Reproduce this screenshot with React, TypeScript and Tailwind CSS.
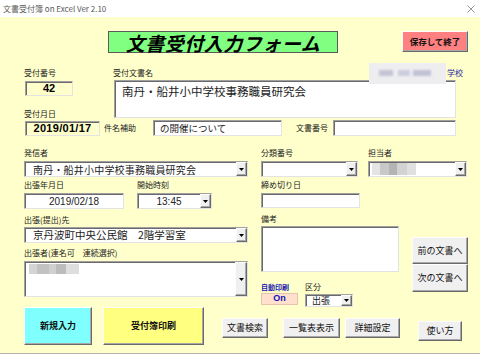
import React from "react";

const LBL = "block h-[12px] leading-[12px] text-[8px] text-[#1a1a1a] whitespace-nowrap";
const SUNKEN =
  "border border-t-[#a0a0a0] border-l-[#a0a0a0] border-b-[#e3e3e3] border-r-[#e3e3e3] shadow-[inset_1px_1px_0_#6a6a6a]";
const RAISED =
  "border border-t-[#fdfdfd] border-l-[#fdfdfd] border-b-[#6a6a6a] border-r-[#6a6a6a] shadow-[inset_-1px_-1px_0_#a8a8a8]";

function Arrow() {
  return (
    <svg width="5" height="3" viewBox="0 0 5 3">
      <polygon points="0,0 5,0 2.5,3" fill="#000" />
    </svg>
  );
}

function DropBtn() {
  return (
    <div className={`w-[11px] h-full bg-[#f0f0f0] flex items-center justify-center shrink-0 ${RAISED}`}>
      <Arrow />
    </div>
  );
}

function Combo({
  className = "",
  textClass = "",
  children,
}: {
  className?: string;
  textClass?: string;
  children?: React.ReactNode;
}) {
  return (
    <div className={`bg-white flex items-stretch ${SUNKEN} ${className}`}>
      <div className={`flex-1 flex items-center overflow-hidden whitespace-nowrap ${textClass}`}>{children}</div>
      <DropBtn />
    </div>
  );
}

function Btn({ className = "", children }: { className?: string; children?: React.ReactNode }) {
  return (
    <div className={`flex items-center justify-center whitespace-nowrap text-[#111] ${RAISED} ${className}`}>
      {children}
    </div>
  );
}

export default function App() {
  return (
    <div className="w-[480px] h-[357px] bg-white overflow-hidden font-['Noto_Sans_CJK_JP',sans-serif]">
      {/* title bar */}
      <div className="h-[17px] flex items-center justify-between pl-[3px] pr-[5px] bg-white">
        <span className="text-[8px] leading-none text-[#5a5a5a]">文書受付簿 on Excel Ver 2.10</span>
        <svg width="8" height="8" viewBox="0 0 8 8">
          <path d="M0.5 0.5 L7.5 7.5 M7.5 0.5 L0.5 7.5" stroke="#8a8a8a" strokeWidth="0.9" />
        </svg>
      </div>

      {/* form body */}
      <div className="h-[337px] bg-[#FFFFCC] border-b border-[#b4b4b4] flex flex-col">
        {/* header */}
        <div className="h-[40px] flex items-start pt-[14px] shrink-0">
          <div className="ml-[108px] w-[230px] h-[22px] bg-[#80FF80] border border-[#5a5a5a] flex items-center justify-center">
            <span className="text-[19px] leading-none font-bold italic text-black tracking-[0.5px]">
              文書受付入力フォーム
            </span>
          </div>
          <Btn className="ml-[64px] w-[66px] h-[21px] bg-[#FF8080] text-[8.5px] font-bold">保存して終了</Btn>
        </div>

        {/* section 2 */}
        <div className="h-[79px] flex shrink-0">
          <div className="w-[104px] pl-[24px] flex flex-col">
            <span className={`${LBL} mt-[10px]`}>受付番号</span>
            <div
              className={`ml-[1px] mt-[2px] w-[48px] h-[15px] bg-[#FFFFCC] flex items-center justify-center font-['Liberation_Sans',sans-serif] font-bold text-[11px] ${SUNKEN}`}
            >
              42
            </div>
            <span className={`${LBL} mt-[12px]`}>受付月日</span>
            <div
              className={`ml-[1px] mt-[1px] w-[75px] h-[15px] bg-[#FFFFCC] flex items-center justify-center font-['Liberation_Sans',sans-serif] font-bold text-[11px] tracking-[0.3px] ${SUNKEN}`}
            >
              2019/01/17
            </div>
          </div>
          <div className="relative flex flex-col">
            <div className="h-[23px] pt-[10px] pl-[9px]">
              <span className={LBL}>受付文書名</span>
            </div>
            <div className={`ml-[10px] w-[342px] h-[38px] bg-white pl-[7px] pt-[2px] text-[11.5px] leading-[17px] text-[#222] ${SUNKEN}`}>
              南丹・船井小中学校事務職員研究会
            </div>
            <div className="mt-[2px] h-[16px] flex items-center">
              <span className="w-[49px] text-[8px] leading-none text-[#1a1a1a]">件名補助</span>
              <div className={`w-[129px] h-[16px] bg-white pl-[6px] flex items-center text-[9.5px] text-[#222] ${SUNKEN}`}>
                の開催について
              </div>
              <span className="ml-[14px] w-[37px] text-[8px] leading-none text-[#1a1a1a]">文書番号</span>
              <div className={`w-[123px] h-[16px] bg-white ${SUNKEN}`} />
            </div>
            {/* redacted school name overlay */}
            <div className="absolute left-[265px] top-[6px] w-[77px] h-[21px] bg-[#eeeef1] overflow-hidden">
              <div className="absolute left-[10px] top-[7px] w-[14px] h-[6px] bg-[#c4c4d4] blur-[1px]" />
              <div className="absolute left-[29px] top-[7px] w-[12px] h-[6px] bg-[#cdcde0] blur-[1px]" />
              <div className="absolute left-[44px] top-[7px] w-[18px] h-[6px] bg-[#c2c2d6] blur-[1px]" />
            </div>
            <span className="absolute left-[343px] top-[10px] whitespace-nowrap text-[8px] leading-[12px] text-[#2a2aa0]">
              学校
            </span>
          </div>
        </div>

        {/* section 3 */}
        <div className="mt-[11px] h-[160px] flex shrink-0">
          {/* left column */}
          <div className="w-[248px] pl-[24px] flex flex-col">
            <span className={LBL}>発信者</span>
            <Combo className="mt-[2px] w-[224px] h-[16px]" textClass="pl-[8px] text-[10px] tracking-[0.2px] text-[#222]">
              南丹・船井小中学校事務職員研究会
            </Combo>
            <div className="mt-[2px] flex gap-[13px]">
              <div className="flex flex-col">
                <span className={LBL}>出張年月日</span>
                <div
                  className={`mt-[2px] w-[100px] h-[16px] bg-white flex items-center justify-center font-['Liberation_Sans',sans-serif] text-[10px] text-[#222] ${SUNKEN}`}
                >
                  2019/02/18
                </div>
              </div>
              <div className="flex flex-col">
                <span className={LBL}>開始時刻</span>
                <Combo
                  className="mt-[2px] w-[75px] h-[16px]"
                  textClass="justify-center font-['Liberation_Sans',sans-serif] text-[10px] text-[#222]"
                >
                  13:45
                </Combo>
              </div>
            </div>
            <span className={`${LBL} mt-[5px]`}>出張(提出)先</span>
            <Combo className="mt-[1px] w-[224px] h-[16px]" textClass="pl-[8px] text-[10.5px] text-[#222] whitespace-pre">
              京丹波町中央公民館　2階学習室
            </Combo>
            <span className={`${LBL} mt-[4px] whitespace-pre`}>出張者(連名可　連続選択)</span>
            <div className={`mt-[2px] w-[224px] h-[36px] bg-white flex ${SUNKEN}`}>
              <div className="relative flex-1">
                <div className="absolute left-[4px] top-[2px] w-[50px] h-[10px] flex blur-[0.6px]">
                  <div className="w-[8px] h-full bg-[#d4d4d4]" />
                  <div className="w-[12px] h-full bg-[#c2c2c2]" />
                  <div className="w-[7px] h-full bg-[#d0d0d0]" />
                  <div className="w-[10px] h-full bg-[#bcbcbc]" />
                  <div className="w-[13px] h-full bg-[#dedede]" />
                </div>
              </div>
              <div className={`w-[12px] h-full bg-[#f0f0f0] flex items-center justify-center ${RAISED}`}>
                <Arrow />
              </div>
            </div>
          </div>

          {/* right column */}
          <div className="ml-[13px] flex flex-col">
            <div className="flex gap-[10px]">
              <div className="flex flex-col">
                <span className={LBL}>分類番号</span>
                <Combo className="mt-[2px] w-[97px] h-[16px]" />
              </div>
              <div className="flex flex-col">
                <span className={LBL}>担当者</span>
                <Combo className="mt-[2px] w-[99px] h-[16px]" textClass="pl-[3px]">
                  <div className="flex h-[12px] blur-[0.6px]">
                    <div className="w-[8px] bg-[#e4e4e4]" />
                    <div className="w-[9px] bg-[#c8c8c8]" />
                    <div className="w-[8px] bg-[#b4b4b4]" />
                    <div className="w-[10px] bg-[#d2d2d2]" />
                    <div className="w-[9px] bg-[#e0e0e0]" />
                  </div>
                </Combo>
              </div>
            </div>
            <span className={`${LBL} mt-[2px]`}>締め切り日</span>
            <div className={`mt-[2px] w-[99px] h-[16px] bg-white ${SUNKEN}`} />
            <div className="flex">
              <div className="w-[138px] flex flex-col">
                <span className={`${LBL} mt-[5px]`}>備考</span>
                <div className={`mt-[1px] w-[138px] h-[46px] bg-white ${SUNKEN}`} />
                <div className="mt-[9px] flex">
                  <div className="flex flex-col">
                    <span className="block h-[12px] leading-[12px] text-[7px] font-bold text-[#1515b0]">自動印刷</span>
                    <div className="w-[37px] h-[12px] bg-[#FFE0CC] border border-[#e8c4b0] flex items-center justify-center font-['Liberation_Sans',sans-serif] text-[9px] font-bold text-[#1010b8]">
                      On
                    </div>
                  </div>
                  <div className="ml-[7px] flex flex-col">
                    <span className={LBL}>区分</span>
                    <Combo className="mt-[1px] w-[48px] h-[13px]" textClass="pl-[6px] text-[9px] leading-none text-[#222]">
                      出張
                    </Combo>
                  </div>
                </div>
              </div>
              <div className="ml-[13px] mt-[29px] flex flex-col">
                <Btn className="w-[56px] h-[27px] bg-[#f0f0f0] text-[9px]">前の文書へ</Btn>
                <Btn className="w-[56px] h-[28px] bg-[#f0f0f0] text-[9px]">次の文書へ</Btn>
              </div>
            </div>
          </div>
        </div>

        {/* section 4 */}
        <div className="flex items-start shrink-0">
          <Btn className="ml-[24px] w-[68px] h-[38px] bg-[#80FFFF] text-[9px] font-bold">新規入力</Btn>
          <Btn className="ml-[11px] w-[101px] h-[38px] bg-[#FFFF80] text-[9px] font-bold">受付簿印刷</Btn>
          <Btn className="ml-[18px] mt-[11px] w-[46px] h-[20px] bg-[#f0f0f0] text-[9px]">文書検索</Btn>
          <Btn className="ml-[15px] mt-[11px] w-[57px] h-[20px] bg-[#f0f0f0] text-[9px]">一覧表表示</Btn>
          <Btn className="ml-[5px] mt-[11px] w-[55px] h-[20px] bg-[#f0f0f0] text-[9px]">詳細設定</Btn>
          <Btn className="ml-[18px] mt-[14px] w-[44px] h-[20px] bg-[#f0f0f0] text-[9px]">使い方</Btn>
        </div>
      </div>
    </div>
  );
}
